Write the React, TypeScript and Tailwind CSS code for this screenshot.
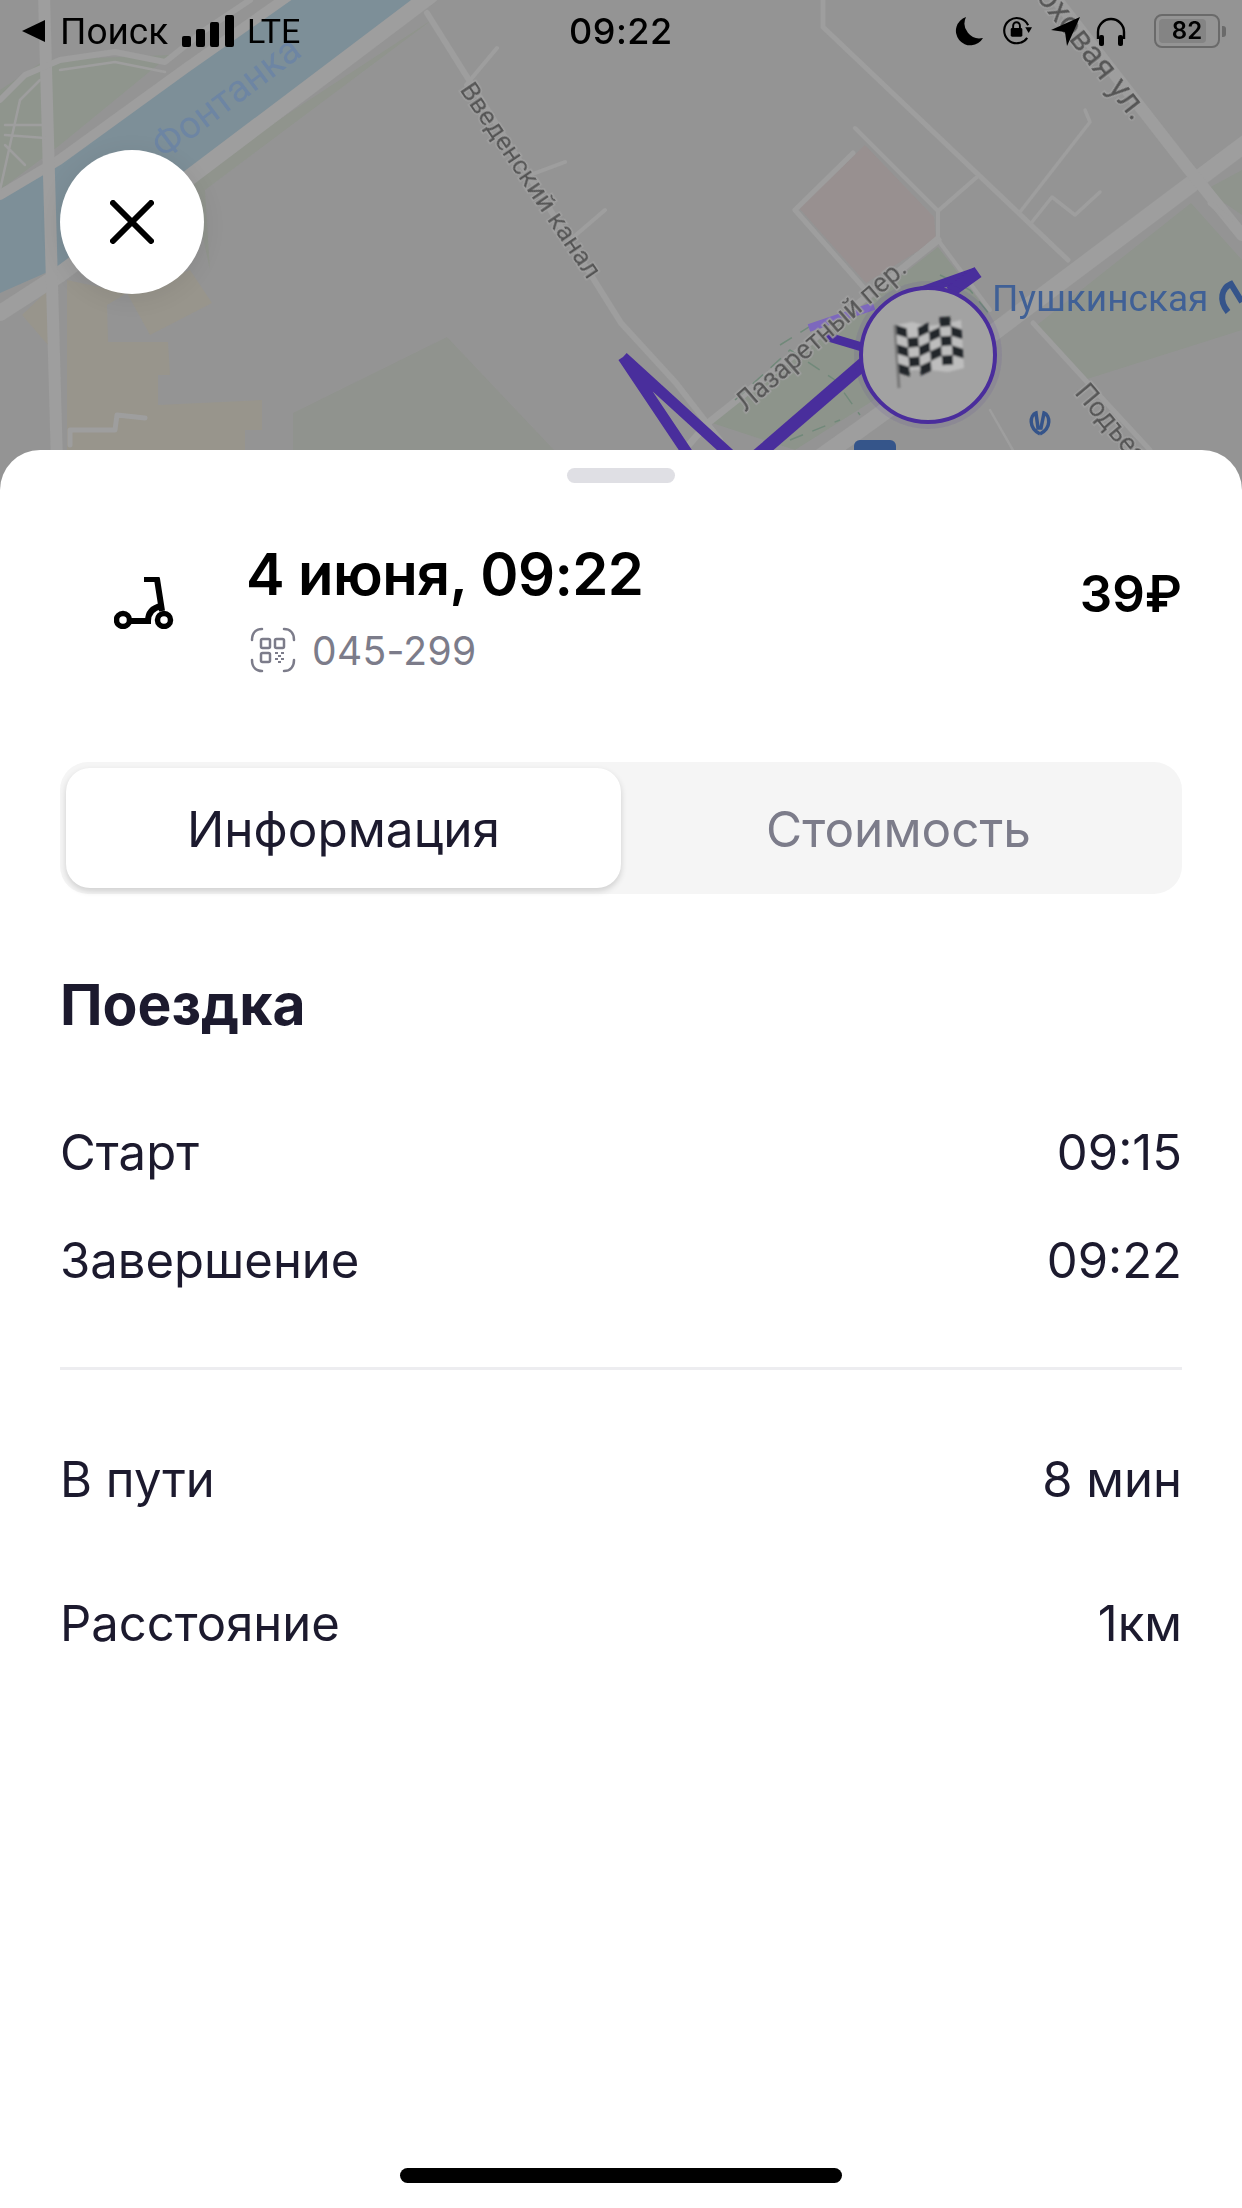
import React from "react";

const road = "#9e9e9e";

function flagCells() {
  const cols = 6;
  const rows = 5;
  const y = (u: number, v: number) => 325 - 5 * u + 48 * v + 5 * Math.sin(u * 6.28);
  const x = (u: number, v: number) => 896 + 65 * u + 3 * v;
  const cells: string[] = [];
  for (let c = 0; c < cols; c++) {
    for (let r = 0; r < rows; r++) {
      if ((c + r) % 2 !== 0) continue;
      const u0 = c / cols;
      const u1 = (c + 1) / cols;
      const v0 = r / rows;
      const v1 = (r + 1) / rows;
      cells.push(
        `${x(u0, v0)},${y(u0, v0)} ${x(u1, v0)},${y(u1, v0)} ${x(u1, v1)},${y(u1, v1)} ${x(u0, v1)},${y(u0, v1)}`
      );
    }
  }
  return cells;
}

function MapLayer() {
  return (
    <svg className="absolute inset-0" width="1242" height="500" viewBox="0 0 1242 500" fill="none">
      <defs>
        <filter id="soft" x="-5%" y="-5%" width="110%" height="110%">
          <feGaussianBlur stdDeviation="0.7" />
        </filter>
        <filter id="softer" x="-10%" y="-10%" width="120%" height="120%">
          <feGaussianBlur stdDeviation="1.1" />
        </filter>
      </defs>
      <rect width="1242" height="500" fill="#949494" />
      <g filter="url(#soft)">
        {/* river */}
        <polygon points="285,0 420,0 190,173 59,267 0,293 0,200 59,163 186,73" fill="#7d8f98" />
        {/* greens */}
        <polygon points="0,90 45,60 170,55 60,145 0,190" fill="#8f958d" />
        <polygon points="436,17 205,190 210,270 190,178" fill="#90948d" />
        <polygon points="447,337 554,450 293,450 293,413" fill="#90938e" />
        <polygon points="938,247 989,313 874,400 795,450 712,423" fill="#8d948b" />
        <polygon points="1191,203 1242,260 1242,330 1084,380 1037,325" fill="#8f948d" />
        <polygon points="1242,170 1242,215 1205,190" fill="#8f948d" />
        {/* yellow buildings */}
        <polygon points="22,315 48,290 48,345" fill="#98958c" />
        <polygon points="67,280 127,293 107,305 108,342 168,342 170,375 158,375 158,405 262,400 262,430 245,430 245,500 67,500" fill="#98958c" />
        <polygon points="127,293 190,270 212,303 150,335" fill="#98958c" />
        {/* pink block */}
        <polygon points="865,145 934,217 936,240 866,283 799,208" fill="#989090" />
        {/* roads */}
        <g stroke={road} strokeLinecap="round" strokeLinejoin="round">
          <path d="M431,-5 L190,177 L59,275 L0,313" strokeWidth="16" />
          <path d="M290,-5 L186,68 L59,160 L0,195" strokeWidth="10" />
          <path d="M44,-5 L58,500" strokeWidth="12" />
          <path d="M0,100 L25,75 L60,60 L115,52 L165,62 L205,30 L250,0" strokeWidth="6" />
          <path d="M0,190 L20,100 L40,80 M5,125 L45,125 M5,135 L45,138 M5,145 L25,165 M60,70 L115,62 L165,72" strokeWidth="2.5" />
          <path d="M427,13 L621,323 L676,383 L720,440" strokeWidth="6" />
          <path d="M466,85 L497,48 M530,175 L565,162 M570,240 L605,210" strokeWidth="4" />
          <path d="M70,445 L70,430 L115,430 L117,415 L145,418" strokeWidth="5" />
          <path d="M1250,140 L993,333 L859,430 L760,500" strokeWidth="17" />
          <path d="M1053,-5 L1187,167 L1242,235" strokeWidth="12" />
          <path d="M823,-5 L823,27 L1068,260" strokeWidth="5" />
          <path d="M855,128 L938,211 L938,237 L875,290 M938,211 L977,177" strokeWidth="4" />
          <path d="M853,153 L795,210 L863,287" strokeWidth="5" />
          <path d="M938,240 L708,423 L640,500" strokeWidth="7" />
          <path d="M938,240 L990,310" strokeWidth="4" />
          <path d="M1085,110 L1090,122 L1020,212 M1032,222 L1052,197 L1075,215 L1100,192" strokeWidth="3.5" />
          <path d="M1033,323 L1088,383 L1150,450" strokeWidth="5" />
          <path d="M1210,203 L1230,220" strokeWidth="5" />
          <path d="M990,410 L1030,480" strokeWidth="2.5" />
        </g>
        {/* park paths */}
        <path d="M735,400 L790,350 L835,380 L860,415 M790,440 L840,420 M780,345 L820,320 M940,275 L970,290 L990,315" stroke="#71897a" strokeWidth="1.5" strokeDasharray="14 10" />
        {/* route */}
        <g stroke="#4a2d9c" strokeLinejoin="miter">
          <path d="M623,357 L736,460 M623,357 L692,460" strokeWidth="11" />
          <path d="M752,460 L870,358" strokeWidth="13" />
          <path d="M825,336 L862,347" strokeWidth="9" />
          <path d="M919,292 L975,272" strokeWidth="9" />
          <path d="M950,292 L978,272" strokeWidth="12" />
        </g>
        <path d="M809,328 L874,306" stroke="#7d67bd" strokeWidth="8" />
        <path d="M860,440 h30 a6 6 0 0 1 6 6 v10 h-42 v-10 a6 6 0 0 1 6 -6" fill="#35548a" />
      </g>
      {/* pin */}
      <circle cx="928" cy="355" r="74" fill="#4a2d9c" fillOpacity="0.1" />
      <circle cx="928" cy="355" r="67" fill="#a2a2a2" stroke="#4a2d9c" strokeWidth="4" />
      {/* flag */}
      <g filter="url(#softer)">
        <path d="M895,325 L899,388" stroke="#777" strokeWidth="3" />
        <polygon points="896,325 912,322 928,326 944,324 961,320 964,368 948,372 930,370 914,370 899,373" fill="#bdbdbd" />
        {flagCells().map((p) => (
          <polygon key={p} points={p} fill="#22252a" />
        ))}
      </g>
      {/* labels */}
      <g fontFamily="Roboto, sans-serif" filter="url(#soft)">
        <text x="226" y="110" transform="rotate(-37 226 97)" textAnchor="middle" fontSize="38" fill="#6d85a3">Фонтанка</text>
        <text x="531" y="189" transform="rotate(56 531 180)" textAnchor="middle" fontSize="26.5" fill="#555" stroke="#a0a0a0" strokeWidth="3" paintOrder="stroke">Введенский канал</text>
        <text x="821" y="344" transform="rotate(-41 821 335)" textAnchor="middle" fontSize="27" fill="#555" stroke="#a0a0a0" strokeWidth="3" paintOrder="stroke">Лазаретный пер.</text>
        <text x="1141" y="126" transform="rotate(52 1141 116)" textAnchor="end" fontSize="33" fill="#555" stroke="#a0a0a0" strokeWidth="3" paintOrder="stroke">Моховая ул.</text>
        <text x="1080" y="396" transform="rotate(50 1080 388)" fontSize="27" fill="#555" stroke="#a0a0a0" strokeWidth="3" paintOrder="stroke">Подъезд</text>
        <text x="992" y="311" fontSize="37" fill="#3f6196">Пушкинская</text>
      </g>
      <g fill="none" stroke="#35548a">
        <path d="M1228,312 C1218,300 1222,288 1231,284 L1242,302" strokeWidth="6" />
        <path d="M1040,434 C1028,428 1030,415 1036,413 L1038,428 L1041,428 L1044,413 C1050,415 1052,428 1040,434" strokeWidth="3.5" />
      </g>
    </svg>
  );
}

function StatusBar() {
  return (
    <div className="absolute top-0 left-0 w-full h-[62px] flex items-center text-black font-['Inter',sans-serif] pl-[22px] pr-[16px]">
      <div className="flex items-center w-[547px]">
        <svg width="24" height="24" viewBox="0 0 24 24" className="mr-[14px]"><path d="M0 12 L23 1 V23 Z" fill="#000" /></svg>
        <span className="text-[37px] leading-none font-['Roboto',sans-serif] w-[108px]">Поиск</span>
        <svg width="52" height="32" viewBox="0 0 52 32" className="ml-[14px] mr-[13px]" fill="#000">
          <rect x="0" y="21" width="9" height="11" rx="2" />
          <rect x="14" y="14" width="9" height="18" rx="2" />
          <rect x="28" y="7" width="9" height="25" rx="2" />
          <rect x="43" y="0" width="9" height="32" rx="2" />
        </svg>
        <span className="text-[34px] leading-none font-['Roboto',sans-serif]">LTE</span>
      </div>
      <span className="text-[36px] leading-none font-medium tracking-[0.5px] w-[106px]">09:22</span>
      <div className="ml-auto flex items-center">
        <svg width="30" height="30" viewBox="0 0 30 30" className="mr-[18px]"><path d="M12 1 A14.5 14.5 0 1 0 29 22 A15 15 0 0 1 12 1 Z" fill="#000" /></svg>
        <svg width="31" height="30" viewBox="0 0 32 30" fill="none" className="mr-[18px]">
          <path d="M26 22 A13 13 0 1 1 27 9" stroke="#000" strokeWidth="2.2" />
          <path d="M24 11 H31 L27.5 17 Z" fill="#000" />
          <rect x="9" y="12" width="12" height="9" rx="1.5" fill="#000" />
          <path d="M11.5 12 V9.5 A3.5 3.5 0 0 1 18.5 9.5 V12" stroke="#000" strokeWidth="2" />
        </svg>
        <svg width="29" height="29" viewBox="0 0 29 29" className="mr-[16px]"><path d="M29 0 L0 13 L14 15 L16 29 Z" fill="#000" /></svg>
        <svg width="30" height="29" viewBox="0 0 30 29" fill="none" className="mr-[28px]">
          <path d="M2 22 V15 A13 13 0 0 1 28 15 V22" stroke="#000" strokeWidth="2.4" />
          <rect x="3" y="18" width="5" height="11" rx="2" fill="#000" />
          <rect x="22" y="18" width="5" height="11" rx="2" fill="#000" />
        </svg>
        <div className="w-[66px] h-[34px] rounded-[8px] border-[2.5px] border-[#6a6a6a] p-[3px] relative flex items-center justify-center">
          <div className="absolute left-[3px] top-[3px] bottom-[3px] w-[47px] rounded-[4px] bg-[#848484]" />
          <span className="relative text-[24px] font-semibold leading-none">82</span>
        </div>
        <div className="w-[4px] h-[11px] ml-[2px] rounded-r-[3px] bg-[#6a6a6a]" />
      </div>
    </div>
  );
}

function Row({ label, value, className }: { label: string; value: string; className: string }) {
  return (
    <div className={`flex justify-between items-center text-[49px] leading-[54px] text-[#1c1a2e] ${className}`}>
      <span>{label}</span>
      <span>{value}</span>
    </div>
  );
}

export default function App() {
  return (
    <div className="w-[1242px] h-[2208px] overflow-hidden bg-white flex flex-col font-['Inter',sans-serif]">
      <div className="relative h-[500px] shrink-0">
        <MapLayer />
        <StatusBar />
        <button className="absolute left-[60px] top-[150px] w-[144px] h-[144px] rounded-full bg-white flex items-center justify-center shadow-[0_4px_24px_rgba(0,0,0,0.08)]">
          <svg width="44" height="44" viewBox="0 0 44 44" fill="none"><path d="M3 3 L41 41 M41 3 L3 41" stroke="#000" strokeWidth="6" strokeLinecap="round" /></svg>
        </button>
      </div>
      <div className="relative -mt-[50px] flex-1 bg-white rounded-t-[40px] px-[60px] flex flex-col">
        <div className="self-center mt-[18px] w-[108px] h-[15px] rounded-full bg-[#dfdfe4]" />
        <div className="flex items-start mt-[59px] h-[140px]">
          <div className="w-[186px] shrink-0 pt-[35px]">
            <svg width="60" height="52" viewBox="0 0 60 52" fill="none" className="ml-[54px]">
              <path d="M30 2 H43 L48 34" stroke="#000" strokeWidth="6" strokeLinejoin="round" />
              <path d="M14 44 H34 C34 36 38 31 47 29" stroke="#000" strokeWidth="6" />
              <circle cx="9" cy="43" r="6.5" stroke="#000" strokeWidth="5.5" />
              <circle cx="50" cy="43" r="6.5" stroke="#000" strokeWidth="5.5" />
            </svg>
          </div>
          <div className="flex flex-col">
            <div className="text-[58px] leading-[64px] font-semibold text-black tracking-[-0.6px]">4 июня, 09:22</div>
            <div className="flex items-center mt-[21px] ml-[4px]">
              <svg width="46" height="46" viewBox="0 0 46 46" fill="none" stroke="#7c7c8a" strokeWidth="2.5" strokeLinecap="round">
                <path d="M2 13 C2 6 6 2 12 2 M34 2 C40 2 44 6 44 13 M2 33 C2 40 6 44 12 44 M34 44 C40 44 44 40 44 33" />
                <rect x="11" y="12" width="9" height="9" rx="1.5" />
                <rect x="25" y="12" width="9" height="9" rx="1.5" />
                <rect x="11" y="26" width="9" height="9" rx="1.5" />
                <path d="M25 26 h3 M31 26 h3 M28 29 h3 M25 32 h3 M31 32 h3 M28 35 h3" strokeWidth="2" strokeLinecap="butt" />
              </svg>
              <span className="text-[39px] leading-none text-[#7c7c8a] ml-[16px] tracking-[0.3px]">045-299</span>
            </div>
          </div>
          <div className="ml-auto mt-[24px] text-[51px] leading-[56px] font-semibold text-black">39₽</div>
        </div>
        <div className="flex mt-[80px] h-[132px] rounded-[28px] bg-[#f5f5f5] p-[6px] text-[49.5px]">
          <div className="w-[555px] rounded-[24px] bg-white shadow-[0_3px_6px_rgba(0,0,0,0.16)] flex items-center justify-center pt-[2px] text-[#1c1a2e]">Информация</div>
          <div className="flex-1 flex items-center justify-center pt-[2px] text-[#7c7c8a]">Стоимость</div>
        </div>
        <div className="mt-[79px] text-[57px] leading-[64px] font-bold text-[#1c1a2e]">Поездка</div>
        <Row label="Старт" value="09:15" className="mt-[89px]" />
        <Row label="Завершение" value="09:22" className="mt-[54px]" />
        <div className="mt-[79px] h-[3px] bg-[#ededf0]" />
        <Row label="В пути" value="8 мин" className="mt-[83px]" />
        <Row label="Расстояние" value="1км" className="mt-[90px]" />
        <div className="mt-auto mb-[25px] self-center w-[442px] h-[15px] rounded-full bg-black" />
      </div>
    </div>
  );
}
